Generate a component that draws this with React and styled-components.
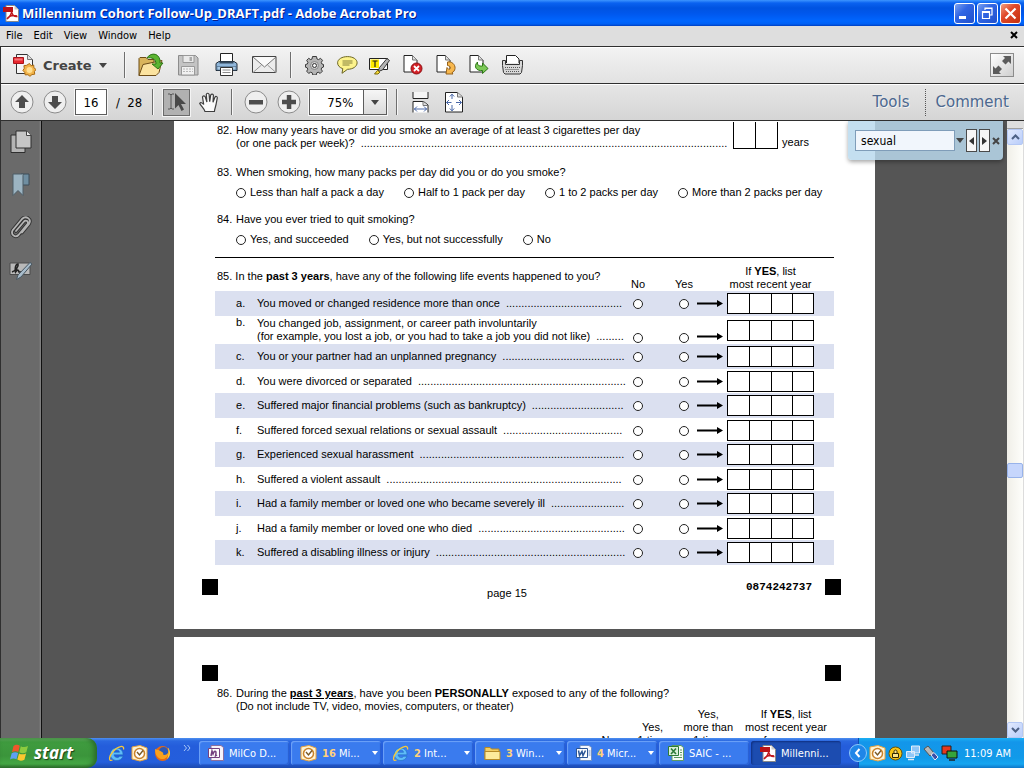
import React from 'react'
import styled, { createGlobalStyle, css } from 'styled-components';

const events = [
  { letter: 'a', text: 'You moved or changed residence more than once', dots: 38 },
  { letter: 'b', first: 'You changed job, assignment, or career path involuntarily', text: '(for example, you lost a job, or you had to take a job you did not like)', dots: 9 },
  { letter: 'c', text: 'You or your partner had an unplanned pregnancy', dots: 40 },
  { letter: 'd', text: 'You were divorced or separated', dots: 68 },
  { letter: 'e', text: 'Suffered major financial problems (such as bankruptcy)', dots: 30 },
  { letter: 'f', text: 'Suffered forced sexual relations or sexual assault', dots: 39 },
  { letter: 'g', text: 'Experienced sexual harassment', dots: 67 },
  { letter: 'h', text: 'Suffered a violent assault', dots: 77 },
  { letter: 'i', text: 'Had a family member or loved one who became severely ill', dots: 24 },
  { letter: 'j', text: 'Had a family member or loved one who died', dots: 48 },
  { letter: 'k', text: 'Suffered a disabling illness or injury', dots: 62 },
]

const tasks = [
  { icon: 'note', label: 'MilCo D...' },
  { icon: 'outlook', count: 16, label: 'Mi...' },
  { icon: 'ie', count: 2, label: 'Int...' },
  { icon: 'folder', count: 3, label: 'Win...' },
  { icon: 'word', count: 4, label: 'Micr...' },
  { icon: 'excel', label: 'SAIC - ...' },
  { icon: 'pdf', label: 'Millenni...', active: true },
]

const icons = {
  pdf: (
    <svg width="16" height="17" viewBox="0 0 16 17">
      <path d="M3 .5h8.500l4 4v12H3z" fill="#fff" stroke="#888" />
      <path d="M11.500.5v4h4z" fill="#ccc" />
      <path d="M0 2h10v5H0z" fill="#b91318" />
      <path d="M4 14c3-2 5-6 4.500-8.500M8.500 6c.5 4 2.500 6 6 5.500M4 14c2-3 6-4 10-3" fill="none" stroke="#c0161c" strokeWidth="1.400" />
    </svg>
  ),
  create: (
    <svg width="23" height="24" viewBox="0 0 23 24">
      <path d="M3.500 1.500h11l5 5v14h-16z" fill="#f6f6f6" stroke="#333" />
      <path d="M14.500 1.500v5h5" fill="#ddd" stroke="#777" />
      <path d="M.5 4.500h10v6H.5z" fill="#e8262d" stroke="#a8131a" />
      <path d="M1.500 5.500h8v2h-8z" fill="#f5757a" />
      <path d="M16.500 10.500l1.600 2.200 2.600-.7.200 2.700 2.100 1.800-1.600 2.100.3 2.600-2.700.3-2 1.800-2.100-1.600-2.700.2-.5-2.600-1.800-1.800 1.400-2.200-.4-2.600 2.700-.4z" fill="#f2b44a" stroke="#a86a12" />
      <circle cx="16.500" cy="17" r="3" fill="#ffe093" />
    </svg>
  ),
  open: (
    <svg width="26" height="24" viewBox="0 0 26 24">
      <path d="M1 22.500V5.500l1-1h6l2 2h6v4" fill="#d9b45c" stroke="#6c4c17" />
      <path d="M1 22.500l4-11 19-4-3 12-3 3z" fill="#fbe3a0" stroke="#6c4c17" />
      <path d="M9 5c3-5 11-6 13 2v3h3l-5 6-6-5h4c0-5-4-7-9-6z" fill="#5cb531" stroke="#2c7414" />
    </svg>
  ),
  save: (
    <svg width="21" height="21" viewBox="0 0 21 21">
      <path d="M.5.5h17l2.500 2.500v17H.5z" fill="#c4c4c4" stroke="#8c8c8c" />
      <path d="M5 .5h11v7H5z" fill="#e9e9e9" stroke="#999" />
      <path d="M11.500 2h2.500v4h-2.500z" fill="#aaa" />
      <path d="M3.500 11.500h13v8.500h-13z" fill="#f1f1f1" stroke="#999" />
      <path d="M5 14h10M5 16.500h10" stroke="#b8b8b8" strokeDasharray="2 1" />
    </svg>
  ),
  print: (
    <svg width="23" height="24" viewBox="0 0 23 24">
      <path d="M5.500 10V.5h12V10" fill="#fff" stroke="#222" />
      <path d="M1 10.500l3-2h15l3 2v7H1z" fill="#8fb6da" stroke="#222c38" />
      <path d="M4.500 9.500h14" stroke="#33485c" strokeWidth="2" />
      <path d="M2 13.500h19v3.500H2z" fill="#a9c9e4" stroke="#41617f" strokeWidth=".6" />
      <path d="M5.500 14.500h12v8h-12z" fill="#fff" stroke="#333" />
      <path d="M7.500 17h8M7.500 19.500h8" stroke="#8c8c8c" />
    </svg>
  ),
  mail: (
    <svg width="25" height="18" viewBox="0 0 25 18">
      <path d="M.5.5h23.500v16H.5z" fill="#ececec" stroke="#444" />
      <path d="M1 16.500l8.500-7.500M24 16.500L15.500 9" stroke="#999" />
      <path d="M1 1l11.500 10L24 1" fill="#fafafa" stroke="#777" />
    </svg>
  ),
  gear: (
    <svg width="19" height="19" viewBox="0 0 19 19">
      <path d="M7.500.5h4l.5 2.500 1.500.6 2-1.300 2 2-1.200 2.200.6 1.500 1.600.5v2.500l-1.800.8-.5 1.400 1.200 2-2.200 2.200-2-1.200-1.400.6-.6 2.200H7.800l-.6-2.200-1.500-.6-2 1.200-2-2.200 1.100-2-.6-1.400-1.700-.6V8.500L2.300 8l.6-1.500L1.700 4.300l2-2 2 1.300L7 3z" fill="#b4b4b4" stroke="#3a3a3a" />
      <circle cx="9.500" cy="9.500" r="4" fill="#cfcfcf" stroke="#8a8a8a" />
      <circle cx="9.500" cy="9.500" r="2" fill="#f4f4f4" stroke="#333" />
    </svg>
  ),
  comment: (
    <svg width="21" height="18" viewBox="0 0 21 18">
      <path d="M10.500.6c5.500 0 9.600 2.600 9.600 6.200s-4.100 6.500-9.600 6.500L5 17.300l.8-4.600C2.500 11.600.6 9.500.6 6.800.6 3.200 5 .6 10.500.6z" fill="#fdf38c" stroke="#6b6524" />
      <path d="M5.500 5h10M5.500 7h10M5.500 9h7" stroke="#85803c" />
    </svg>
  ),
  highlight: (
    <svg width="22" height="19" viewBox="0 0 22 19">
      <path d="M.5 2.500h18v11H.5z" fill="#fff" stroke="#222" />
      <path d="M1.500 3.500h8.500v8.500H1.500z" fill="#ffea00" />
      <path d="M3.500 5h5M6 5v6" stroke="#222" strokeWidth="1.200" />
      <path d="M18 2.500l2.500 2-7 9.500-4.500 1.500 1.500-4z" fill="#b5b5b5" stroke="#3b3b3b" />
      <path d="M5.500 18l3-3.500 2.500 1.500-2 2z" fill="#ffe13a" stroke="#77660a" />
    </svg>
  ),
  remove: (
    <svg width="20" height="20" viewBox="0 0 20 20">
      <path d="M1 .5h8.500l4.500 4.500v12H1z" fill="#fff" stroke="#222" />
      <path d="M9.500.5V5H14" fill="#ddd" stroke="#777" />
      <circle cx="13.500" cy="13.500" r="5.500" fill="#d22026" stroke="#8d0f13" />
      <path d="M11 11l5 5M16 11l-5 5" stroke="#fff" strokeWidth="1.800" />
    </svg>
  ),
  rotate: (
    <svg width="20" height="20" viewBox="0 0 20 20">
      <path d="M1 .5h8.500l4.500 4.500v12H1z" fill="#fff" stroke="#222" />
      <path d="M9.500.5V5H14" fill="#ddd" stroke="#777" />
      <path d="M11.500 7c4-1 8 2.500 7.500 6.500-.2 2-1.500 3.500-3 4.200l1 1.300H10l1-6.500 1.800 2c2-.5 2.500-3.500-1.300-4z" fill="#f8b84e" stroke="#93601a" />
    </svg>
  ),
  extract: (
    <svg width="20" height="20" viewBox="0 0 20 20">
      <path d="M1 .5h8.500l4.500 4.500v12H1z" fill="#fff" stroke="#222" />
      <path d="M9.500.5V5H14" fill="#ddd" stroke="#777" />
      <path d="M8.500 7c-.5 3 1.500 4.500 5 4V8l5.500 5.500-5.500 5v-3c-6 .8-9.500-4-5-8.500z" fill="#7cc957" stroke="#2b7414" />
    </svg>
  ),
  typewriter: (
    <svg width="21" height="20" viewBox="0 0 21 20">
      <path d="M4.500 8V.5h9L17 4v4" fill="#fff" stroke="#222" />
      <path d="M.5 5.500h3v4h14v-4h3v5l-1 7-1.500 1.500h-15L1.500 17.500l-1-7z" fill="#d8d8d8" stroke="#333" />
      <path d="M3 12.500h15M3.500 14.500h14M4 16.500h13" stroke="#555" strokeDasharray="1 1" />
    </svg>
  ),
  up: (
    <svg width="24" height="24" viewBox="0 0 24 24">
      <circle cx="12" cy="12" r="11" fill="#efefef" stroke="#8b8b8b" />
      <path d="M12 5l7 7h-4v6H9v-6H5z" fill="#4d4d4d" />
    </svg>
  ),
  down: (
    <svg width="24" height="24" viewBox="0 0 24 24">
      <circle cx="12" cy="12" r="11" fill="#efefef" stroke="#8b8b8b" />
      <path d="M12 19l7-7h-4V6H9v6H5z" fill="#4d4d4d" />
    </svg>
  ),
  select: (
    <svg width="20" height="20" viewBox="0 0 20 20">
      <path d="M1 2h2l1 1 1-1h2M4 3v13M1 17h2l1-1 1 1h2" fill="none" stroke="#555" />
      <path d="M8 1l11 11h-5l3 5.500-2.500 1.500-3-6L8 16.500z" fill="#484848" />
    </svg>
  ),
  hand: (
    <svg width="21" height="21" viewBox="0 0 21 21">
      <path d="M6 19.500c-1-3-3.500-5-5.300-8 .8-1.500 2.600-.8 4 1L3.500 5c.5-1.700 2.200-1.400 2.800 0l1.600 5-.6-7.600c.8-1.600 2.300-1.400 2.800 0l.6 7.200 1-6.600c.8-1.400 2.400-1.200 2.700.2l-.4 7 1.900-5c.8-1.300 2.500-.8 2.400.6-.6 3-1 6.500-1.900 9.200-.4 1.500-.8 2.500-1 4.500z" fill="#fafafa" stroke="#3e3e3e" strokeWidth="1.200" />
    </svg>
  ),
  minus: (
    <svg width="24" height="24" viewBox="0 0 24 24">
      <circle cx="12" cy="12" r="11" fill="#efefef" stroke="#8b8b8b" />
      <path d="M5 10h14v4.500H5z" fill="#4d4d4d" />
    </svg>
  ),
  plus: (
    <svg width="24" height="24" viewBox="0 0 24 24">
      <circle cx="12" cy="12" r="11" fill="#efefef" stroke="#8b8b8b" />
      <path d="M9.800 5h4.500v4.800H19v4.500h-4.700V19H9.800v-4.700H5V9.800h4.800z" fill="#4d4d4d" />
    </svg>
  ),
  fitWidth: (
    <svg width="17" height="21" viewBox="0 0 17 21">
      <path d="M1 0v6.500h15V0" fill="#f5f5f5" stroke="#222" />
      <path d="M1 20.500v-11h10.500L16 13v7.500" fill="#fff" stroke="#222" />
      <path d="M11 9.500v4h5" fill="#ddd" stroke="#777" />
      <path d="M2 17h13M5 14.500L2.500 17 5 19.500M12 14.500l2.500 2.500-2.500 2.500" fill="none" stroke="#4a68a8" />
    </svg>
  ),
  fitPage: (
    <svg width="18" height="21" viewBox="0 0 18 21">
      <path d="M.5.5h12l5 4.500v15H.5z" fill="#fff" stroke="#222" />
      <path d="M12.500.5V5h5" fill="#ddd" stroke="#777" />
      <path d="M7 2v5M7 13v6M1.500 10.500h5M11 10.500h5.500M4.800 4.500L7 2.200l2.200 2.300M4.800 16.500L7 18.800l2.200-2.300M4 8l-2.500 2.500L4 13M14 8l2.500 2.500L14 13" fill="none" stroke="#4a68a8" />
    </svg>
  ),
  expand: (
    <svg width="20" height="20" viewBox="0 0 20 20">
      <path d="M19 1v8l-2.500-2.500-3 3-3.500-3.500 3-3L11 1zM1 19v-8l2.500 2.500 3-3L10 14l-3 3 2 2z" fill="#5c5c5c" />
    </svg>
  ),
  pages: (
    <svg width="22" height="24" viewBox="0 0 22 24">
      <path d="M1 5h14v17.500H1z" fill="#b4b4b4" stroke="#2e2e2e" />
      <path d="M6 1h10.500L21 5.500V18H6z" fill="#c6c6c6" stroke="#2e2e2e" />
      <path d="M16.500 1v4.500H21" fill="#eee" stroke="#444" />
    </svg>
  ),
  bookmark: (
    <svg width="20" height="24" viewBox="0 0 20 24">
      <path d="M10 1h8v11h-8z" fill="#6f8ea1" stroke="#3c4d58" />
      <path d="M2 1h11l-1 1.500v20l-5-5-5 5z" fill="#9cb4c2" stroke="#4c5c66" />
    </svg>
  ),
  clip: (
    <svg width="22" height="24" viewBox="0 0 22 24">
      <g fill="none" strokeLinecap="round">
        <path d="M6 15l8-9.500c2-2 5 0 3.500 2.500L8.500 19c-3 3-8 0-6-4.500L12 3c4-4 10 0 7 5l-7 8.500" stroke="#333" strokeWidth="3.600" />
        <path d="M6 15l8-9.500c2-2 5 0 3.500 2.500L8.500 19c-3 3-8 0-6-4.500L12 3c4-4 10 0 7 5l-7 8.500" stroke="#b5b5b5" strokeWidth="1.800" />
      </g>
    </svg>
  ),
  sign: (
    <svg width="24" height="20" viewBox="0 0 24 20">
      <path d="M1 2h20v11.500H1z" fill="#b9b9b9" stroke="#4a4a4a" />
      <path d="M3 11c3-1 7-5 6-8-3 0-3 6-2.500 8 2-3 3-2 3.500 0h4" fill="none" stroke="#222" strokeWidth="1.600" />
      <path d="M21 1.500l2 1.500L12 16l-4.500 2.500L9 14z" fill="#a8bccb" stroke="#475661" />
    </svg>
  ),
  windows: (
    <svg width="20" height="19" viewBox="0 0 20 19">
      <path d="M3.500 3C5.500 1.500 8 1.500 9.800 2.800L8.300 9C6.500 7.800 4 8 2 9.200z" fill="#f0562b" />
      <path d="M10.800 3.200c2 1.200 4.500 1.200 7.200-.2l-1.700 6.300c-2.500 1.400-5 1.200-7-.1z" fill="#8ccb3f" />
      <path d="M1.700 10.200c2-1.200 4.500-1.400 6.400-.1L6.500 16.300C4.600 15 2 15.200 0 16.400z" fill="#5fa0f2" />
      <path d="M9 10.400c2 1.200 4.600 1.300 7.100 0l-1.700 6.300c-2.500 1.400-5 1.300-7.100-.1z" fill="#fbc82f" />
    </svg>
  ),
  ie: (
    <svg width="17" height="17" viewBox="0 0 17 17">
      <path d="M15 9.800H6c.4 3.200 4.500 3.500 5.600 1.500H15C13 17.500 2.500 17 2.300 9.200 2.200 1 15.300.8 15 9.800zM6 7.300h5.500c-.3-3-5.200-3.200-5.500 0z" fill="#5fbcf8" stroke="#1664b4" strokeWidth=".5" />
      <path d="M15.500 4.500c1.500-5-6-3.500-10.500 2C1 11 0 17 4.500 15" fill="none" stroke="#f7c83b" strokeWidth="1.300" />
    </svg>
  ),
  outlook: (
    <svg width="17" height="17" viewBox="0 0 17 17">
      <path d="M1 2l8-1.500 7 2.500v11l-7 2L1 14z" fill="#fff2cf" stroke="#e9a23b" />
      <circle cx="8.500" cy="8.500" r="5" fill="#fff" stroke="#c9822a" strokeWidth="1.500" />
      <path d="M6 7l2.500 3L12 5.500" fill="none" stroke="#7b5a24" strokeWidth="1.400" />
    </svg>
  ),
  firefox: (
    <svg width="17" height="17" viewBox="0 0 17 17">
      <circle cx="8.500" cy="8.500" r="7.500" fill="#e66a13" />
      <circle cx="9.500" cy="6.800" r="4.800" fill="#2b59b8" />
      <path d="M1 4c1.500 1 3 .5 4.500 1.500C8 7 10 7.500 9 9.500c1.500 1 3.500.5 5-1.500.5 4-3 6.500-6.500 6S1 10 1 4z" fill="#f9a11e" />
      <path d="M14 2.500c3 4 2.500 9-1 11.500 1.500-3 2-7 1-11.500z" fill="#fbd43c" />
    </svg>
  ),
  note: (
    <svg width="16" height="16" viewBox="0 0 16 16">
      <path d="M3 .5h10l2.500 2v13H3z" fill="#f7f2fa" stroke="#8b6f9d" />
      <path d="M.5 3.500h11v9H.5z" fill="#fff" stroke="#74407f" />
      <path d="M3 11l1-5 1 3c1-3 3-4 3-1l-.5 3 1.500-1" fill="none" stroke="#74407f" strokeWidth="1.500" />
    </svg>
  ),
  folder: (
    <svg width="17" height="15" viewBox="0 0 17 15">
      <path d="M1 13.500v-12h5l1.500 1.500H15v10.500z" fill="#f3cd62" stroke="#b68a27" />
      <path d="M1 13.500v-8h15v8z" fill="#fdea9c" stroke="#b68a27" />
    </svg>
  ),
  word: (
    <svg width="16" height="16" viewBox="0 0 16 16">
      <path d="M4 .5h9l2.500 2v13H4z" fill="#f5f8fe" stroke="#6f8fc4" />
      <path d="M.5 3.500h11v9H.5z" fill="#fff" stroke="#2b5597" />
      <path d="M2.500 5.500l1 5 2.500-4 1 4 2.500-5" fill="none" stroke="#2b5597" strokeWidth="1.500" />
      <path d="M12.500 6h2M12.500 8h2M12.500 10h2" stroke="#6f8fc4" />
    </svg>
  ),
  excel: (
    <svg width="16" height="16" viewBox="0 0 16 16">
      <path d="M4 .5h9l2.500 2v13H4z" fill="#f4faf4" stroke="#5c9a63" />
      <path d="M.5 1.500h10v9H.5z" fill="#d9efd9" stroke="#2d7a38" />
      <path d="M3 3.500l5 5.500M8 3.500L3 9" stroke="#2d7a38" strokeWidth="1.600" />
      <path d="M6 12.500h8M12 5h2M12 7.500h2M12 10h2" stroke="#5c9a63" />
    </svg>
  ),
  lock: (
    <svg width="15" height="15" viewBox="0 0 15 15">
      <circle cx="7.500" cy="7.500" r="6.500" fill="#f6c416" stroke="#6a5206" />
      <path d="M4.500 7.500h6v4h-6zM6 7V5.500c0-2 3-2 3 0V7" fill="#f9e58a" stroke="#2f2604" />
    </svg>
  ),
  network: (
    <svg width="16" height="16" viewBox="0 0 16 16">
      <path d="M6.500 1h8v7h-8zM1.500 6.500h8v6h-8z" fill="#8fc6f7" stroke="#e3eefb" />
      <path d="M3 14.500h6M9 10h5" stroke="#dfe6f2" strokeWidth="1.500" />
    </svg>
  ),
  usb: (
    <svg width="16" height="16" viewBox="0 0 16 16">
      <path d="M1 4l4-3 6 7-4 3z" fill="#b8b8b8" stroke="#555" />
      <path d="M8 10l3-2.500 4 4.500-3 3z" fill="#3a4ea8" stroke="#e8e8f4" />
    </svg>
  ),
  monitors: (
    <svg width="17" height="16" viewBox="0 0 17 16">
      <path d="M1 1h9v8H1z" fill="#e8371c" stroke="#222" />
      <path d="M6 6h10v7H6z" fill="#35a53a" stroke="#111" />
      <path d="M8 15h6" stroke="#222" strokeWidth="1.500" />
    </svg>
  ),
}

const Caret = ({ color = '#444' }) => (
  <svg width="8" height="5" viewBox="0 0 8 5"><path d="M0 0h8L4 5z" fill={color} /></svg>
)

const Arrow = () => (
  <svg width="26" height="7" viewBox="0 0 26 7"><path d="M0 2.500h20V0l6 3.500L20 7V4.500H0z" fill="#000" /></svg>
)

const Tool = ({ name, label, width, pressed }) => (
  <ToolButton type="button" aria-label={label} $width={width} $pressed={pressed}>{icons[name]}</ToolButton>
)

const Choice = ({ group, children }) => (
  <ChoiceLabel><Radio type="radio" name={group} />{children}</ChoiceLabel>
)

const YearBoxes = ({ label, count = 4, open }) => (
  <Boxes $open={open}>
    {Array.from({ length: count }, (_, i) => (
      <Digit key={i} maxLength={1} aria-label={`${label}, digit ${i + 1}`} />
    ))}
  </Boxes>
)

const App = () => {
  return (
    <>
    <GlobalStyle />
    <Screen>
      <TitleBar>
        {icons.pdf}
        <WindowTitle>Millennium Cohort Follow-Up_DRAFT.pdf - Adobe Acrobat Pro</WindowTitle>
        <WindowButton type="button" aria-label="Minimize">
          <svg width="19" height="19" viewBox="0 0 19 19"><path d="M4 12h7v3H4z" fill="#fff" /></svg>
        </WindowButton>
        <WindowButton type="button" aria-label="Restore">
          <svg width="19" height="19" viewBox="0 0 19 19"><path d="M7 6V4h7v7h-2M7 4.500h7M4.500 7.500h7v7h-7zM4.500 8.500h7" fill="none" stroke="#fff" strokeWidth="1.200" /></svg>
        </WindowButton>
        <WindowButton type="button" aria-label="Close" $close>
          <svg width="19" height="19" viewBox="0 0 19 19"><path d="M4.500 4.500l10 10M14.500 4.500l-10 10" stroke="#fff" strokeWidth="2.200" /></svg>
        </WindowButton>
      </TitleBar>
      <MenuBar>
        <MenuItem type="button">File</MenuItem>
        <MenuItem type="button">Edit</MenuItem>
        <MenuItem type="button">View</MenuItem>
        <MenuItem type="button">Window</MenuItem>
        <MenuItem type="button">Help</MenuItem>
        <Spacer />
        <CloseDocument type="button" aria-label="Close document">
          <svg width="8" height="8" viewBox="0 0 8 8"><path d="M1 1l6 6M7 1L1 7" stroke="#000" strokeWidth="2" /></svg>
        </CloseDocument>
      </MenuBar>
      <Toolbar>
        <CreateButton type="button">{icons.create}<span>Create</span><Caret /></CreateButton>
        <Separator />
        <Tool name="open" label="Open" width={38} />
        <Tool name="save" label="Save" width={38} />
        <Tool name="print" label="Print" width={38} />
        <Tool name="mail" label="Email" width={38} />
        <Separator />
        <Tool name="gear" label="Preferences" width={33} />
        <Tool name="comment" label="Add note" width={33} />
        <Tool name="highlight" label="Highlight text" width={33} />
        <Tool name="remove" label="Delete pages" width={33} />
        <Tool name="rotate" label="Rotate pages" width={33} />
        <Tool name="extract" label="Extract pages" width={33} />
        <Tool name="typewriter" label="Typewriter" width={33} />
        <Spacer />
        <ExpandButton type="button" aria-label="Read mode">{icons.expand}</ExpandButton>
      </Toolbar>
      <Toolbar $lower>
        <Tool name="up" label="Previous page" width={33} />
        <Tool name="down" label="Next page" width={33} />
        <PageInput aria-label="Page number" defaultValue="16" />
        <PageTotal>/&nbsp; 28</PageTotal>
        <Separator />
        <Tool name="select" label="Select" width={27} pressed />
        <Tool name="hand" label="Hand" width={32} />
        <Separator />
        <Tool name="minus" label="Zoom out" width={33} />
        <Tool name="plus" label="Zoom in" width={33} />
        <Zoom>
          <ZoomInput aria-label="Zoom" defaultValue="75%" />
          <ZoomButton type="button" aria-label="Zoom levels"><Caret /></ZoomButton>
        </Zoom>
        <Separator />
        <Tool name="fitWidth" label="Fit width" width={33} />
        <Tool name="fitPage" label="Fit page" width={33} />
        <Spacer />
        <PanelButton type="button">Tools</PanelButton>
        <DottedSeparator />
        <PanelButton type="button">Comment</PanelButton>
      </Toolbar>
      <Workspace>
        <Sidebar>
          <SideButton type="button" aria-label="Pages">{icons.pages}</SideButton>
          <SideButton type="button" aria-label="Bookmarks">{icons.bookmark}</SideButton>
          <SideButton type="button" aria-label="Attachments">{icons.clip}</SideButton>
          <SideButton type="button" aria-label="Signatures">{icons.sign}</SideButton>
        </Sidebar>
        <Canvas>
          <Sheet>
            <Questions>
              <Question>
                <Num>82.</Num>
                <QuestionText>
                  How many years have or did you smoke an average of at least 3 cigarettes per day<br />
                  (or one pack per week)?<Dots>{'.'.repeat(120)}</Dots>
                </QuestionText>
                <YearsAnswer><YearBoxes label="Years smoked" count={2} open />years</YearsAnswer>
              </Question>
              <Question $gap={16}>
                <Num>83.</Num>
                <QuestionText>When smoking, how many packs per day did you or do you smoke?</QuestionText>
              </Question>
              <Choices>
                <Choice group="packs">Less than half a pack a day</Choice>
                <Choice group="packs">Half to 1 pack per day</Choice>
                <Choice group="packs">1 to 2 packs per day</Choice>
                <Choice group="packs">More than 2 packs per day</Choice>
              </Choices>
              <Question $gap={14}>
                <Num>84.</Num>
                <QuestionText>Have you ever tried to quit smoking?</QuestionText>
              </Question>
              <Choices>
                <Choice group="quit">Yes, and succeeded</Choice>
                <Choice group="quit">Yes, but not successfully</Choice>
                <Choice group="quit">No</Choice>
              </Choices>
              <EventTable>
                <thead>
                  <tr>
                    <QuestionHead colSpan={2}>85. In the <b>past 3 years</b>, have any of the following life events happened to you?</QuestionHead>
                    <NoHead>No</NoHead>
                    <YesHead>Yes</YesHead>
                    <ArrowHead />
                    <YearHead>If <b>YES</b>, list<br />most recent year</YearHead>
                  </tr>
                </thead>
                <tbody>
                  {events.map((event) => (
                    <EventRow key={event.letter} $tall={!!event.first}>
                      <LetterCell>{event.letter}.</LetterCell>
                      <EventCell>
                        {event.first && <>{event.first}<br /></>}
                        {event.text}<Dots>{'.'.repeat(event.dots)}</Dots>
                      </EventCell>
                      <NoCell><Radio type="radio" name={`event-${event.letter}`} aria-label={`${event.letter}. No`} /></NoCell>
                      <YesCell><Radio type="radio" name={`event-${event.letter}`} aria-label={`${event.letter}. Yes`} /></YesCell>
                      <ArrowCell><Arrow /></ArrowCell>
                      <YearCell><YearBoxes label={`${event.letter}. Most recent year`} /></YearCell>
                    </EventRow>
                  ))}
                </tbody>
              </EventTable>
            </Questions>
            <SheetFooter>
              <Mark />
              <PageName>page 15</PageName>
              <FormNumber>0874242737</FormNumber>
              <Mark />
            </SheetFooter>
          </Sheet>
          <Sheet>
            <SheetHeader><Mark /><Mark /></SheetHeader>
            <Questions>
              <Question>
                <Num>86.</Num>
                <QuestionText>
                  During the <u><b>past 3 years</b></u>, have you been <b>PERSONALLY</b> exposed to any of the following?<br />
                  (Do not include TV, video, movies, computers, or theater)
                </QuestionText>
              </Question>
              <ExposureHeads>
                <span>No</span>
                <span>Yes,<br />1 time</span>
                <span>Yes,<br />more than<br />1 time</span>
                <span>If <b>YES</b>, list<br />most recent year<br />of exposure</span>
              </ExposureHeads>
            </Questions>
          </Sheet>
          <FindBar>
            <FindInput aria-label="Find" defaultValue="sexual" />
            <FindMenu type="button" aria-label="Find options"><Caret /></FindMenu>
            <FindStep type="button" aria-label="Find previous">
              <svg width="5" height="8" viewBox="0 0 5 8"><path d="M5 0v8L0 4z" fill="#333" /></svg>
            </FindStep>
            <FindStep type="button" aria-label="Find next">
              <svg width="5" height="8" viewBox="0 0 5 8"><path d="M0 0v8l5-4z" fill="#333" /></svg>
            </FindStep>
            <FindMenu type="button" aria-label="Close find">
              <svg width="8" height="8" viewBox="0 0 8 8"><path d="M1 1l6 6M7 1L1 7" stroke="#444" strokeWidth="2" /></svg>
            </FindMenu>
          </FindBar>
        </Canvas>
        <Scrollbar>
          <ScrollCorner />
          <ScrollButton type="button" aria-label="Scroll up">
            <svg width="9" height="6" viewBox="0 0 9 6"><path d="M1 5l3.500-3.500L8 5" fill="none" stroke="#4d6185" strokeWidth="2" /></svg>
          </ScrollButton>
          <Track $grow={317} />
          <Thumb />
          <Track $grow={244} />
          <ScrollButton type="button" aria-label="Scroll down">
            <svg width="9" height="6" viewBox="0 0 9 6"><path d="M1 1l3.500 3.500L8 1" fill="none" stroke="#4d6185" strokeWidth="2" /></svg>
          </ScrollButton>
        </Scrollbar>
      </Workspace>
      <Taskbar>
        <StartButton type="button">{icons.windows}<span>start</span></StartButton>
        <QuickLaunch>
          <TrayButton type="button" aria-label="Internet Explorer">{icons.ie}</TrayButton>
          <TrayButton type="button" aria-label="Outlook">{icons.outlook}</TrayButton>
          <TrayButton type="button" aria-label="Firefox">{icons.firefox}</TrayButton>
          <More type="button" aria-label="More programs">
            <svg width="8" height="6" viewBox="0 0 8 6"><path d="M1 0l2.500 3L1 6M4.500 0L7 3 4.500 6" fill="none" stroke="#a8c8f8" /></svg>
          </More>
        </QuickLaunch>
        <TaskList>
          {tasks.map((task) => (
            <TaskButton key={task.label} type="button" $active={task.active}>
              {icons[task.icon]}
              <TaskLabel>{task.count && <b>{task.count}</b>} {task.label}</TaskLabel>
              {task.count && <svg width="6" height="4" viewBox="0 0 6 4"><path d="M0 0h6L3 4z" fill="#fff" /></svg>}
            </TaskButton>
          ))}
        </TaskList>
        <Tray>
          <TrayToggle type="button" aria-label="Hide icons">
            <svg width="18" height="18" viewBox="0 0 18 18">
              <circle cx="9" cy="9" r="8.500" fill="#1f86e8" stroke="#8fc9f8" />
              <path d="M10.500 5L7 9l3.500 4" fill="none" stroke="#fff" strokeWidth="2" />
            </svg>
          </TrayToggle>
          {icons.outlook}
          {icons.lock}
          {icons.network}
          {icons.usb}
          {icons.monitors}
          <Clock>11:09 AM</Clock>
        </Tray>
      </Taskbar>
    </Screen>
    </>
  )
}

export default App;

const uiFont = '"DejaVu Sans Condensed", "DejaVu Sans", sans-serif'
const wideFont = '"DejaVu Sans", sans-serif'

const GlobalStyle = createGlobalStyle`
  * {
    box-sizing: border-box;
  }
  body {
    margin: 0;
    overflow: hidden;
    font-family: ${uiFont};
    font-size: 11px;
  }
  button, input {
    margin: 0;
    padding: 0;
    border: 0;
    border-radius: 0;
    background: none;
    color: inherit;
    font: inherit;
  }
  svg {
    display: block;
    flex: none;
  }
`
const Screen = styled.div`
  display: flex;
  flex-direction: column;
  height: 100vh;
`
const Spacer = styled.div`
  flex: 1;
`
const TitleBar = styled.header`
  display: flex;
  align-items: center;
  flex: none;
  gap: 2px;
  height: 26px;
  padding: 0 3px;
  background: linear-gradient(#3d95ff 0, #0a62f0 3px, #0053e1 8px, #0058ee 14px, #0066ff 21px, #0060f4 24px, #003fc0 26px);
`
const WindowTitle = styled.h1`
  flex: 1;
  margin: 0 0 0 1px;
  color: #fff;
  font-family: "Open Sans", sans-serif;
  font-size: 13px;
  font-weight: 700;
  text-shadow: 1px 1px #0a1883;
  white-space: nowrap;
`
const WindowButton = styled.button`
  display: flex;
  align-items: center;
  justify-content: center;
  width: 21px;
  height: 21px;
  border: 1px solid #fff;
  border-radius: 3px;
  background: ${(props) => props.$close
    ? 'linear-gradient(135deg, #f0a084, #e0492a 40%, #c5300f)'
    : 'linear-gradient(135deg, #7ba2f0, #3166e4 40%, #2050cc)'};
`
const MenuBar = styled.nav`
  display: flex;
  align-items: center;
  flex: none;
  height: 20px;
  padding: 0 4px 2px 0;
  background: #dedede;
`
const MenuItem = styled.button`
  padding: 0 5px 0 6px;
`
const CloseDocument = styled.button`
  padding: 2px;
`
const Toolbar = styled.div`
  display: flex;
  align-items: center;
  flex: none;
  height: 37px;
  padding: 0 10px 0 5px;
  border-top: 1px solid #2f2f2f;
  border-left: 1px solid #2f2f2f;
  box-shadow: inset 0 1px #fff;
  background: linear-gradient(#f3f3f3, #e2e2e2);
  ${(props) => props.$lower && css`
    height: 38px;
    padding: 0 9px 0 4px;
    border-bottom: 1px solid #2f2f2f;
    background: linear-gradient(#e6e6e6, #d5d5d5);
  `}
`
const Separator = styled.div`
  width: 2px;
  height: 26px;
  margin: 0 6px;
  border-left: 1px solid #6e6e6e;
  border-right: 1px solid #f6f6f6;
`
const DottedSeparator = styled.div`
  height: 27px;
  margin: 0 4px 0 9px;
  border-left: 1px dotted #555;
`
const ToolButton = styled.button`
  display: flex;
  align-items: center;
  justify-content: center;
  width: ${(props) => props.$width}px;
  height: 27px;
  ${(props) => props.$pressed && css`
    margin: 0 3px;
    border: 1px solid #6b6b6b;
    outline: 1px solid #f4f4f4;
    background: #b1b1b1;
  `}
`
const CreateButton = styled.button`
  display: flex;
  align-items: center;
  gap: 7px;
  padding: 0 11px 0 7px;
  color: #444;
  font-family: ${wideFont};
  font-size: 13px;
  font-weight: 700;
`
const ExpandButton = styled.button`
  display: flex;
  align-items: center;
  justify-content: center;
  width: 24px;
  height: 24px;
  border: 1px solid #8c8c8c;
  background: linear-gradient(135deg, #fff, #cfcfcf);
`
const PageInput = styled.input`
  width: 32px;
  height: 26px;
  margin-left: 4px;
  border: 1px solid #5c5c5c;
  outline: 1px solid #f6f6f6;
  background: #fff;
  font-size: 13px;
  text-align: center;
`
const PageTotal = styled.span`
  margin: 0 4px 0 9px;
  font-size: 13px;
`
const Zoom = styled.div`
  display: flex;
  width: 78px;
  height: 26px;
  margin: 0 3px 0 4px;
  border: 1px solid #5c5c5c;
  outline: 1px solid #f6f6f6;
  background: #fff;
`
const ZoomInput = styled.input`
  flex: 1;
  min-width: 0;
  padding-right: 10px;
  font-size: 13px;
  text-align: right;
`
const ZoomButton = styled.button`
  display: flex;
  align-items: center;
  justify-content: center;
  width: 23px;
  border-left: 1px solid #5c5c5c;
  background: linear-gradient(#f6f6f6, #dadada);
`
const PanelButton = styled.button`
  padding: 0 6px;
  color: #4c688f;
  font-family: ${wideFont};
  font-size: 15px;
  text-shadow: 1px 1px #f3f3f3;
`
const Workspace = styled.main`
  display: flex;
  flex: 1;
  min-height: 0;
`
const Sidebar = styled.aside`
  display: flex;
  flex-direction: column;
  align-items: center;
  gap: 14px;
  width: 42px;
  padding-top: 6px;
  border-left: 1px solid #2f2f2f;
  border-right: 1px solid #111;
  background: linear-gradient(90deg, #6a6a6a 38px, #858585 40px);
`
const SideButton = styled.button`
  display: flex;
  align-items: center;
  justify-content: center;
  width: 30px;
  height: 29px;
`
const Canvas = styled.div`
  position: relative;
  display: flex;
  flex: 1;
  flex-direction: column;
  align-items: center;
  gap: 8px;
  min-width: 0;
  overflow: hidden;
  background: #555;
`
const Sheet = styled.section`
  flex: none;
  width: 701px;
  padding: 3px 34px 29px 28px;
  background: #fff;
  color: #000;
  font-family: "Liberation Sans", Arial, sans-serif;
  font-size: 11px;
  line-height: 13px;
`
const Questions = styled.div`
  margin: 0 7px 0 13px;
`
const Question = styled.div`
  display: flex;
  margin-top: ${(props) => props.$gap || 0}px;
  padding-left: 2px;
`
const Num = styled.span`
  width: 19px;
`
const QuestionText = styled.p`
  margin: 0;
  white-space: nowrap;
`
const Dots = styled.span`
  margin-left: 6px;
`
const YearsAnswer = styled.div`
  display: flex;
  align-items: flex-end;
  gap: 4px;
  margin: -3px 0 0 auto;
  padding: 0 25px 1px 0;
`
const Boxes = styled.div`
  display: inline-flex;
  height: ${(props) => (props.$open ? 27 : 21)}px;
  border: 1px solid #000;
  border-top-width: ${(props) => (props.$open ? 0 : 1)}px;
  background: #fff;
  vertical-align: middle;
`
const Digit = styled.input`
  width: 21px;
  text-align: center;
  & + & {
    width: 22px;
    border-left: 1px solid #000;
  }
  & + & + & {
    width: 21px;
  }
`
const Choices = styled.div`
  display: flex;
  gap: 20px;
  margin: 7px 0 0 21px;
`
const ChoiceLabel = styled.label`
  display: flex;
  align-items: center;
  gap: 4px;
  white-space: nowrap;
`
const Radio = styled.input`
  display: inline-block;
  flex: none;
  width: 10px;
  height: 10px;
  border: 1px solid #222;
  border-radius: 50%;
  background: #fff;
  appearance: none;
  vertical-align: middle;
  &:checked {
    background: #222;
  }
`
const EventTable = styled.table`
  width: 100%;
  margin-top: 11px;
  border-top: 1px solid #000;
  border-collapse: collapse;
  table-layout: auto;
  th, td {
    padding: 0;
    font-weight: 400;
    white-space: nowrap;
  }
  b {
    font-weight: 700;
  }
`
const QuestionHead = styled.th`
  && {
    padding: 12px 0 0 2px;
  }
  text-align: left;
  vertical-align: top;
`
const NoHead = styled.th`
  width: 28px;
  && {
    padding-right: 8px;
  }
  vertical-align: bottom;
`
const YesHead = styled.th`
  width: 41px;
  && {
    padding-left: 15px;
  }
  vertical-align: bottom;
`
const ArrowHead = styled.td`
  width: 30px;
`
const YearHead = styled.th`
  width: 107px;
  && {
    padding: 7px 20px 0 0;
  }
`
const LetterCell = styled.td`
  width: 42px;
  && {
    padding-left: 21px;
  }
`
const EventCell = styled.td``
const NoCell = styled.td`
  && {
    padding-right: 8px;
  }
  text-align: center;
`
const YesCell = styled.td`
  && {
    padding-left: 15px;
  }
  text-align: center;
`
const ArrowCell = styled.td``
const YearCell = styled.td`
  line-height: 1px;
`
const EventRow = styled.tr`
  height: 24px;
  &:nth-child(odd) {
    height: 25px;
    background: #dbe0f0;
  }
  ${(props) => props.$tall && css`
    height: 28px;
    ${LetterCell} {
      vertical-align: top;
    }
    ${NoCell}, ${YesCell} {
      vertical-align: bottom;
    }
    ${ArrowCell} {
      padding-bottom: 4px;
      vertical-align: bottom;
    }
  `}
`
const SheetFooter = styled.footer`
  display: flex;
  margin-top: 14px;
`
const SheetHeader = styled.header`
  display: flex;
  justify-content: space-between;
  margin: 25px 0 6px;
`
const Mark = styled.div`
  width: 16px;
  height: 16px;
  background: #000;
`
const PageName = styled.span`
  flex: 1;
  padding: 8px 0 0 50px;
  text-align: center;
`
const FormNumber = styled.span`
  margin-right: 13px;
  font-family: "Liberation Mono", monospace;
  font-size: 11px;
  font-weight: 700;
  line-height: 16px;
`
const ExposureHeads = styled.div`
  display: flex;
  align-items: flex-end;
  justify-content: flex-end;
  gap: 12px;
  margin-top: -5px;
  padding-right: 7px;
  text-align: center;
  span:first-child {
    margin-right: 10px;
  }
  span:nth-child(2) {
    margin-right: 4px;
  }
`
const FindBar = styled.form`
  position: absolute;
  top: 0;
  right: 4px;
  display: flex;
  align-items: center;
  height: 39px;
  padding: 0 2px 0 7px;
  border-radius: 0 0 4px 4px;
  background: rgba(186, 217, 237, 0.85);
  box-shadow: 0 2px 4px rgba(0, 0, 0, 0.35);
`
const FindInput = styled.input`
  width: 100px;
  height: 21px;
  padding: 0 5px;
  border: 1px solid #7f9db9;
  background: #f1f6fc;
  font-size: 12px;
`
const FindMenu = styled.button`
  display: flex;
  padding: 0 1px;
`
const FindStep = styled.button`
  display: flex;
  align-items: center;
  justify-content: center;
  width: 11px;
  height: 23px;
  margin: 0 1px;
  border: 1px solid #4a4a4a;
  background: #f6f6f6;
`
const Scrollbar = styled.div`
  display: flex;
  flex-direction: column;
  width: 17px;
  border-right: 1px solid #dcdcdc;
  background: linear-gradient(90deg, #f0efe8, #fefefb);
`
const ScrollCorner = styled.div`
  height: 8px;
  border-bottom: 1px solid #a0a0a0;
  background: #dedede;
`
const ScrollButton = styled.button`
  display: flex;
  align-items: center;
  justify-content: center;
  height: 16px;
  border: 1px solid #b4c8f4;
  border-radius: 2px;
  background: linear-gradient(135deg, #e2eafd, #b9cdfa);
`
const Track = styled.div`
  flex: ${(props) => props.$grow};
`
const Thumb = styled.div`
  height: 15px;
  border: 1px solid #98b3ea;
  border-radius: 2px;
  background: #c6d6fc;
`
const Taskbar = styled.footer`
  display: flex;
  flex: none;
  height: 30px;
  background: linear-gradient(#4c8ff0 0, #2a67e0 3px, #245ddb 8px, #245edc 24px, #1c49ae 30px);
  color: #fff;
  font-size: 11px;
`
const StartButton = styled.button`
  display: flex;
  align-items: center;
  gap: 4px;
  width: 97px;
  padding: 0 0 1px 10px;
  border-radius: 0 10px 10px 0;
  background: linear-gradient(#69b567 0, #3f9c3f 4px, #3b953b 18px, #45a845 26px, #2c6e2c 30px);
  box-shadow: inset -3px 0 5px #2a6a2a;
  color: #fff;
  font-family: "Open Sans", sans-serif;
  font-size: 17px;
  font-style: italic;
  font-weight: 700;
  line-height: 22px;
  text-shadow: 1px 1px 1px #173f17;
`
const QuickLaunch = styled.div`
  display: flex;
  align-items: center;
  gap: 6px;
  width: 102px;
  padding: 0 8px 0 11px;
`
const TrayButton = styled.button`
  display: flex;
`
const More = styled.button`
  align-self: flex-start;
  margin: 7px 0 0 auto;
`
const TaskList = styled.div`
  display: flex;
  flex: 1;
  align-items: center;
  gap: 2px;
  min-width: 0;
`
const TaskButton = styled.button`
  display: flex;
  align-items: center;
  gap: 5px;
  width: 90px;
  height: 24px;
  padding: 0 3px 0 9px;
  border-radius: 3px;
  background: ${(props) => (props.$active ? '#1c4cb0' : '#3a7bee')};
  box-shadow: ${(props) => (props.$active
    ? 'inset 1px 1px 2px #0f2f80'
    : 'inset 1px 1px 1px #6fa3f8, inset -1px -1px 1px #2a5fd0')};
  text-align: left;
`
const TaskLabel = styled.span`
  flex: 1;
  white-space: nowrap;
  b {
    color: #ffd27a;
  }
`
const Tray = styled.div`
  display: flex;
  align-items: center;
  gap: 2px;
  padding-right: 13px;
  border-left: 1px solid #0d4fb5;
  background: linear-gradient(#1bb0f4 0, #1396ea 4px, #119ae9 20px, #16a5f0 26px, #0e76c8 30px);
`
const TrayToggle = styled.button`
  margin-left: -10px;
`
const Clock = styled.time`
  margin-left: 4px;
`
